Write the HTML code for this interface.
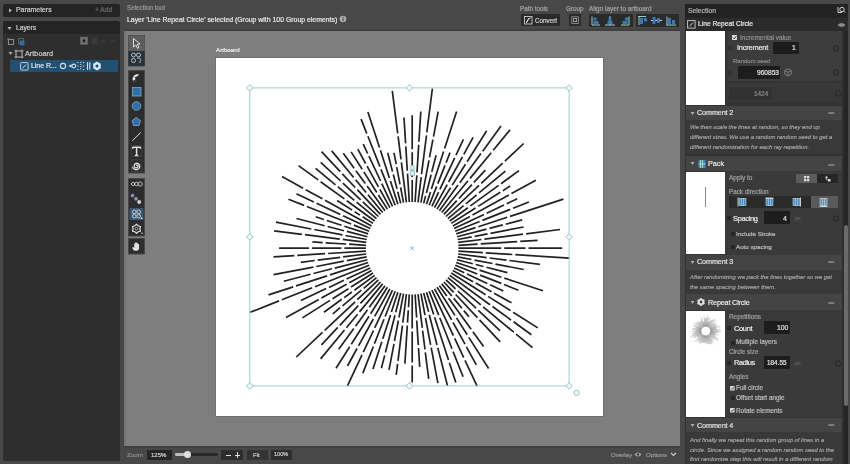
<!DOCTYPE html>
<html><head><meta charset="utf-8">
<style>
*{box-sizing:border-box;margin:0;padding:0}
html,body{width:850px;height:464px;overflow:hidden;background:#484848;font-family:"Liberation Sans",sans-serif;color:#ddd;position:relative}
.a{position:absolute}
.t{position:absolute;white-space:nowrap;line-height:1;-webkit-text-stroke:0.2px currentColor;will-change:transform}
.cm{-webkit-text-stroke:0.15px currentColor;will-change:transform;font-style:italic;font-size:5.85px;color:#a8a8a8;line-height:10px}
svg{position:absolute;overflow:visible}
</style></head><body>
<!-- ================= LEFT PANEL ================= -->
<div class="a" style="left:3px;top:4px;width:117px;height:13px;background:#242424;border-radius:2px"></div>
<svg style="left:8px;top:8px" width="5" height="5"><path d="M1 0.5L4 2.5L1 4.5Z" fill="#bbb"/></svg>
<div class="t" style="left:16px;top:7px;font-size:6.9px;color:#d0d0d0">Parameters</div>
<div class="t" style="left:95px;top:7px;font-size:6.6px;color:#6f6f6f">+ Add</div>
<div class="a" style="left:3px;top:21px;width:117px;height:439.5px;background:#2e2e2e;border-radius:2px"></div>
<div class="a" style="left:3px;top:21px;width:117px;height:13px;background:#242424;border-radius:2px 2px 0 0"></div>
<svg style="left:7px;top:26px" width="5" height="5"><path d="M0.5 1L4.5 1L2.5 4Z" fill="#bbb"/></svg>
<div class="t" style="left:16px;top:24.5px;font-size:6.7px;color:#d0d0d0">Layers</div>
<!-- icon row -->
<svg style="left:6px;top:37px" width="116" height="10">
 <rect x="2.5" y="2.5" width="5" height="5" fill="none" stroke="#8a8a8a" stroke-width="1"/>
 <path d="M1.5 1.5h2M1.5 1.5v2" stroke="#666" stroke-width="0.8"/>
 <rect x="12.5" y="1.5" width="5" height="5" fill="none" stroke="#666" stroke-width="0.8"/>
 <rect x="14" y="4" width="4" height="4" fill="#2f6aa0" stroke="#3d7dbd" stroke-width="0.6"/>
 <rect x="74" y="-0.3" width="8.1" height="8.1" fill="#5e5e5e"/>
 <rect x="75.3" y="1" width="5.5" height="5.5" fill="none" stroke="#8a8a8a" stroke-width="0.6"/>
 <circle cx="78" cy="3.8" r="1.2" fill="#1e1e1e"/>
 <rect x="85.4" y="0" width="5.8" height="7.5" fill="#393939"/>
 <path d="M94.5 5.5l2.5-2l2.5 2" fill="none" stroke="#444" stroke-width="0.9"/>
 <path d="M105 5.5l2.5-2l2.5 2" fill="none" stroke="#444" stroke-width="0.9"/>
</svg>
<!-- artboard row -->
<svg style="left:8px;top:51px" width="5" height="5"><path d="M0.5 1L4.5 1L2.5 4Z" fill="#aaa"/></svg>
<svg style="left:14px;top:49px" width="10" height="10">
 <rect x="2" y="2" width="6" height="6" fill="none" stroke="#bbb" stroke-width="1"/>
 <path d="M0.5 2h1.5M0.5 8h1.5M8 2h1.5M8 8h1.5M2 0.5v1.5M8 0.5v1.5M2 8v1.5M8 8v1.5" stroke="#bbb" stroke-width="0.8"/>
</svg>
<div class="t" style="left:25px;top:50px;font-size:7.3px;color:#cfcfcf">Artboard</div>
<!-- selected layer row -->
<div class="a" style="left:10px;top:59.5px;width:108px;height:12px;background:#225072"></div>
<svg style="left:20px;top:61.5px" width="9" height="9">
 <rect x="0.6" y="0.6" width="7.5" height="7.5" rx="0.8" fill="none" stroke="#cde" stroke-width="0.9"/>
 <path d="M2.5 6.3L6 2.6" stroke="#dde" stroke-width="1"/>
</svg>
<div class="t" style="left:31px;top:62.5px;font-size:6.9px;color:#dde6ee">Line R...</div>
<svg style="left:58px;top:59.5px" width="46" height="12">
 <circle cx="5" cy="6" r="2.6" fill="none" stroke="#cfe0ea" stroke-width="1.1"/>
 <path d="M10.5 6L13.5 4.2V7.8Z" fill="#cfe0ea"/>
 <circle cx="15.8" cy="6" r="1.9" fill="none" stroke="#cfe0ea" stroke-width="1.1"/>
 <path d="M19.3 2.5h1.2M19.3 6h1.2M19.3 9.5h1.2M25 2.5h1.2M25 6h1.2M25 9.5h1.2" stroke="#cfe0ea" stroke-width="1.2"/>
 <path d="M22.8 1.8v8.5" stroke="#cfe0ea" stroke-width="1" stroke-dasharray="1.2 0.9"/>
 <path d="M29.5 2.2v7.6M31.8 2.2v7.6" stroke="#d5e6f0" stroke-width="1.1"/>
 <path d="M39 1.6L42.8 3.8V8.2L39 10.4L35.2 8.2V3.8Z" fill="#d5e6f0"/>
 <circle cx="39" cy="6" r="1.5" fill="#234f6f"/>
</svg>

<!-- ================= TOP BAR ================= -->
<div class="t" style="left:127px;top:5px;font-size:6.3px;color:#9a9a9a">Selection tool</div>
<div class="t" style="left:127px;top:16.5px;font-size:6.9px;color:#e8e8e8">Layer 'Line Repeat Circle' selected (Group with 100 Group elements)</div>
<svg style="left:339px;top:15px" width="8" height="8"><circle cx="4" cy="4" r="3.3" fill="#aaa"/><rect x="3.5" y="3.3" width="1" height="2.8" fill="#3b3b3b"/><rect x="3.5" y="1.8" width="1" height="0.9" fill="#3b3b3b"/></svg>

<div class="t" style="left:520px;top:5.5px;font-size:6.3px;color:#a5a5a5">Path tools</div>
<div class="a" style="left:521px;top:14px;width:39px;height:12px;background:#2b2b2b;border-radius:1px"></div>
<svg style="left:524px;top:16px" width="9" height="9"><rect x="0.5" y="0.5" width="7.5" height="7.5" fill="none" stroke="#ccc" stroke-width="0.9"/><path d="M2 6.5C4 6.5 3 2 6.5 2" fill="none" stroke="#eee" stroke-width="1.1"/></svg>
<div class="t" style="left:534.5px;top:17.5px;font-size:6.3px;color:#cfcfcf">Convert</div>
<div class="t" style="left:565.5px;top:5.5px;font-size:6.3px;color:#a5a5a5">Group</div>
<div class="a" style="left:569px;top:14px;width:11.5px;height:12px;background:#2b2b2b"></div>
<svg style="left:570.5px;top:16px" width="9" height="9"><rect x="0.8" y="0.8" width="6.6" height="6.6" fill="none" stroke="#999" stroke-width="0.8"/><rect x="2.6" y="2.6" width="3" height="3" fill="none" stroke="#bbb" stroke-width="0.8"/></svg>
<div class="t" style="left:588.5px;top:5.5px;font-size:6.4px;color:#a5a5a5">Align layer to artboard</div>
<div class="a" style="left:589px;top:14px;width:43.5px;height:12.5px;background:#2b2b2b"></div>
<div class="a" style="left:635.5px;top:14px;width:43.5px;height:12.5px;background:#2b2b2b"></div>
<svg style="left:589px;top:14px" width="92" height="13">
 <g stroke-width="1">
 <path d="M3 2.5v8.5h8" fill="none" stroke="#9cc"/><rect x="4.5" y="3.5" width="3" height="3" fill="#3a78b0"/><rect x="4.5" y="7" width="5" height="3" fill="#3a78b0"/>
 <path d="M21 2v9.5M16 11h10" fill="none" stroke="#9cc"/><rect x="19.5" y="3.5" width="3" height="3" fill="#3a78b0"/><rect x="18.5" y="7" width="5" height="3" fill="#3a78b0"/>
 <path d="M40 2.5v8.5h-8" fill="none" stroke="#9cc"/><rect x="36" y="3.5" width="3" height="3" fill="#3a78b0"/><rect x="33.5" y="7" width="5" height="3" fill="#3a78b0"/>
 <path d="M49 2.5h8M50 2.5v8.5" fill="none" stroke="#9cc"/><rect x="51" y="4" width="3" height="6" fill="#3a78b0"/><rect x="55" y="4" width="3" height="3.5" fill="#3a78b0"/>
 <path d="M62 6.5h11" fill="none" stroke="#cde"/><rect x="63.5" y="3" width="3" height="7" fill="#3a78b0"/><rect x="68" y="4" width="3" height="5" fill="#3a78b0"/>
 <path d="M77 11h10M78 2.5v8.5" fill="none" stroke="#9cc"/><rect x="79" y="4" width="3" height="6" fill="#3a78b0"/><rect x="83" y="6" width="3" height="4" fill="#3a78b0"/>
 </g>
</svg>

<!-- ================= CANVAS ================= -->
<div class="a" style="left:124px;top:31px;width:556px;height:415px;background:#7e7e7e"></div><div class="a" style="left:124px;top:31px;width:2px;height:415px;background:#747474"></div><div class="a" style="left:124px;top:29.3px;width:556px;height:1.7px;background:#3e3e3e"></div><div class="a" style="left:124px;top:446px;width:556px;height:1.5px;background:#404040"></div>
<div class="a" style="left:216px;top:58px;width:387px;height:358px;background:#fff;box-shadow:0 0 0 0.8px #6c6c6c"></div>
<div class="t" style="left:216px;top:46.5px;font-size:6.2px;color:#ececec">Artboard</div>
<svg style="left:0;top:0" width="850" height="464"><path d="M412.2 201.9L412.2 179.9M412.2 176.9L412.2 152.2M412.2 149.2L412.2 115.2M415.1 202.0L416.8 175.4M417.0 172.4L418.7 144.7M418.9 141.7L420.8 111.5M418.0 202.3L421.2 177.2M421.5 174.2L426.5 135.3M426.8 132.3L432.4 88.5M420.9 202.7L429.0 160.4M429.5 157.4L432.9 139.7M433.5 136.7L438.2 111.7M423.7 203.4L425.6 195.9M426.4 193.0L431.1 174.7M431.8 171.8L436.1 155.2M426.5 204.2L430.5 192.0M431.4 189.1L443.6 151.5M444.6 148.6L456.6 111.5M429.2 205.2L436.7 186.4M437.8 183.6L445.0 165.4M446.1 162.7L450.0 152.6M431.9 206.3L438.6 192.1M439.9 189.4L454.7 157.9M456.0 155.2L463.4 139.4M434.5 207.6L447.2 184.6M448.6 182.0L462.4 156.9M463.8 154.3L473.1 137.3M437.0 209.1L450.6 187.7M452.2 185.1L465.5 164.2M467.1 161.7L486.7 130.8M439.4 210.7L458.0 185.1M459.8 182.7L480.9 153.6M482.7 151.2L501.0 126.0M441.7 212.5L468.0 180.7M470.0 178.4L491.2 152.7M493.2 150.3L510.0 129.9M443.9 214.4L456.8 200.7M458.9 198.5L471.9 184.6M473.9 182.4L485.4 170.2M446.0 216.5L479.0 185.4M481.2 183.4L502.7 163.2M504.9 161.2L523.7 143.5M447.9 218.7L463.6 205.7M465.9 203.8L476.7 194.8M479.0 192.9L505.4 171.1M449.7 221.0L467.9 207.7M470.4 205.9L498.6 185.4M501.0 183.7L519.0 170.6M451.3 223.4L475.5 208.0M478.1 206.4L500.3 192.3M502.9 190.7L510.1 186.0M452.8 225.9L469.9 216.5M472.5 215.1L508.9 195.1M511.5 193.6L535.8 180.3M454.1 228.5L484.0 214.4M486.7 213.2L504.0 205.0M506.8 203.7L517.2 198.8M455.2 231.2L479.6 221.5M482.4 220.4L510.2 209.4M513.0 208.3L528.9 202.0M456.2 233.9L475.5 227.6M478.4 226.7L507.2 217.3M510.1 216.4L563.4 199.1M457.0 236.7L486.5 229.1M489.4 228.4L502.8 224.9M505.7 224.2L522.2 219.9M457.7 239.5L471.7 236.8M474.7 236.3L487.5 233.8M490.5 233.3L523.6 227.0M458.1 242.4L481.4 239.5M484.4 239.1L523.0 234.2M526.0 233.8L560.0 229.5M458.4 245.3L477.7 244.1M480.7 243.9L517.2 241.6M520.2 241.4L537.6 240.3M458.5 248.2L501.2 248.2M504.2 248.2L525.5 248.2M528.5 248.2L562.2 248.2M458.4 251.1L482.8 252.6M485.8 252.8L512.3 254.5M515.3 254.7L569.3 258.1M458.1 254.0L486.7 257.6M489.7 258.0L506.5 260.1M509.4 260.5L539.9 264.3M457.7 256.9L471.5 259.5M474.5 260.1L492.5 263.5M495.4 264.1L523.7 269.5M457.0 259.7L472.8 263.8M475.7 264.5L483.5 266.5M486.4 267.2L507.4 272.6M456.2 262.5L476.7 269.2M479.5 270.1L501.4 277.2M504.3 278.1L543.0 290.7M455.2 265.2L477.3 274.0M480.1 275.1L501.2 283.4M504.0 284.5L518.4 290.2M454.1 267.9L464.3 272.7M467.0 274.0L487.3 283.5M490.0 284.8L503.3 291.1M452.8 270.5L473.1 281.7M475.7 283.1L491.5 291.8M494.1 293.2L511.5 302.8M451.3 273.0L485.6 294.8M488.1 296.4L510.6 310.6M513.1 312.2L537.8 327.9M449.7 275.4L490.0 304.7M492.5 306.5L511.1 320.1M513.6 321.8L531.4 334.8M447.9 277.7L480.8 304.9M483.1 306.8L513.8 332.2M516.1 334.1L532.5 347.7M446.0 279.9L455.6 288.9M457.8 291.0L476.1 308.2M478.3 310.3L500.0 330.6M443.9 282.0L453.6 292.3M455.7 294.5L477.4 317.7M479.5 319.9L500.2 341.9M441.7 283.9L451.8 296.0M453.7 298.4L461.9 308.3M463.8 310.6L468.9 316.8M439.4 285.7L446.8 295.9M448.6 298.3L471.2 329.3M472.9 331.8L483.6 346.5M437.0 287.3L454.9 315.4M456.5 317.9L467.2 334.8M468.8 337.4L488.6 368.5M434.5 288.8L451.6 319.8M453.0 322.4L465.0 344.2M466.4 346.8L476.3 364.8M431.9 290.1L453.4 335.7M454.7 338.4L463.7 357.7M465.0 360.4L477.1 386.1M429.2 291.2L438.7 315.1M439.8 317.8L452.0 348.8M453.1 351.6L463.1 376.8M426.5 292.2L433.7 314.4M434.6 317.2L448.5 359.9M449.4 362.7L455.8 382.4M423.7 293.0L428.6 311.9M429.3 314.8L437.0 345.0M437.8 347.9L447.5 385.7M420.9 293.7L425.0 315.1M425.5 318.0L430.6 344.8M431.2 347.7L437.9 383.2M418.0 294.1L422.3 327.8M422.6 330.7L425.0 349.3M425.3 352.3L428.7 378.8M415.1 294.4L416.6 317.5M416.7 320.5L418.3 345.0M418.5 348.0L419.7 366.9M412.2 294.5L412.2 328.6M412.2 331.6L412.2 362.5M412.2 365.5L412.2 382.5M409.3 294.4L408.5 307.2M408.3 310.2L407.5 322.6M407.3 325.5L404.9 363.6M406.4 294.1L402.8 322.6M402.4 325.6L398.0 360.9M397.6 363.9L396.2 374.9M403.5 293.7L399.0 317.5M398.4 320.5L394.5 340.8M394.0 343.8L389.0 369.8M400.7 293.0L395.7 312.3M395.0 315.2L385.4 352.5M384.7 355.4L381.4 368.2M397.9 292.2L391.4 312.1M390.5 315.0L382.8 338.8M381.8 341.7L373.0 369.0M395.2 291.2L385.1 316.5M384.0 319.3L374.4 343.8M373.3 346.6L362.8 373.1M392.5 290.1L374.7 327.8M373.5 330.5L363.3 352.2M362.0 354.9L347.3 386.1M389.9 288.8L374.7 316.4M373.3 319.0L358.5 345.9M357.0 348.5L347.5 366.0M387.4 287.3L370.6 313.7M369.0 316.3L351.3 344.2M349.7 346.7L336.0 368.3M385.0 285.7L369.3 307.3M367.5 309.7L355.5 326.2M353.8 328.6L338.7 349.3M382.7 283.9L359.5 311.9M357.6 314.2L346.4 327.7M344.5 330.0L320.6 358.9M380.5 282.0L360.4 303.4M358.3 305.6L339.8 325.3M337.8 327.4L321.5 344.8M378.4 279.9L357.3 299.7M355.1 301.8L324.7 330.3M322.5 332.4L296.3 357.0M376.5 277.7L363.7 288.3M361.4 290.2L342.5 305.8M340.2 307.7L332.8 313.9M374.7 275.4L354.4 290.2M351.9 292.0L344.2 297.6M341.8 299.3L324.0 312.3M373.1 273.0L351.0 287.0M348.5 288.7L332.5 298.8M330.0 300.4L302.4 317.9M371.6 270.5L349.3 282.8M346.7 284.2L321.4 298.1M318.8 299.6L286.0 317.6M370.3 267.9L346.6 279.1M343.9 280.3L329.0 287.4M326.2 288.6L300.9 300.6M369.2 265.2L315.0 286.7M312.2 287.8L281.8 299.8M279.1 300.9L250.2 312.3M368.2 262.5L329.9 274.9M327.1 275.9L296.1 285.9M293.2 286.9L268.5 294.9M367.4 259.7L334.8 268.1M331.9 268.8L313.5 273.5M310.6 274.3L283.8 281.2M366.7 256.9L346.8 260.7M343.8 261.2L316.3 266.5M313.4 267.1L273.5 274.7M366.3 254.0L343.1 256.9M340.2 257.3L317.7 260.1M314.7 260.5L300.8 262.3M366.0 251.1L328.1 253.5M325.1 253.7L297.3 255.4M294.3 255.6L273.5 256.9M365.9 248.2L344.4 248.2M341.4 248.2L311.9 248.2M308.9 248.2L279.1 248.2M366.0 245.3L349.1 244.2M346.1 244.0L325.7 242.8M322.7 242.6L312.4 241.9M366.3 242.4L342.8 239.4M339.8 239.1L304.9 234.6M301.9 234.3L274.1 230.8M366.7 239.5L345.4 235.5M342.5 234.9L314.3 229.5M311.3 229.0L275.9 222.2M367.4 236.7L346.9 231.4M344.0 230.7L327.6 226.5M324.7 225.7L296.5 218.5M368.2 233.9L344.4 226.2M341.5 225.2L326.8 220.5M323.9 219.5L315.7 216.8M369.2 231.2L353.9 225.1M351.1 224.0L306.9 206.5M304.1 205.4L288.4 199.2M370.3 228.5L343.1 215.7M340.4 214.4L316.6 203.2M313.8 201.9L296.4 193.7M371.6 225.9L325.0 200.3M322.4 198.8L305.7 189.7M303.1 188.2L282.0 176.6M373.1 223.4L362.6 216.7M360.0 215.1L354.7 211.7M352.2 210.1L337.1 200.5M374.7 221.0L346.8 200.7M344.4 198.9L320.6 181.7M318.2 179.9L298.5 165.6M376.5 218.7L356.6 202.2M354.3 200.3L337.8 186.7M335.5 184.8L315.6 168.3M378.4 216.5L362.8 201.9M360.7 199.8L342.9 183.1M340.7 181.0L320.7 162.3M380.5 214.4L357.3 189.7M355.2 187.5L342.3 173.8M340.3 171.6L321.5 151.6M382.7 212.5L368.0 194.8M366.1 192.5L355.6 179.8M353.7 177.5L331.7 150.9M385.0 210.7L367.1 186.1M365.3 183.6L355.9 170.7M354.1 168.3L343.3 153.3M387.4 209.1L378.4 195.0M376.8 192.5L363.8 171.9M362.2 169.3L351.1 151.9M389.9 207.6L379.9 189.4M378.4 186.8L367.1 166.1M365.6 163.5L357.8 149.2M392.5 206.3L381.8 183.7M380.6 181.0L368.9 156.2M367.6 153.5L363.2 144.1M395.2 205.2L381.0 169.4M379.9 166.6L367.9 136.3M366.8 133.6L361.1 119.1M397.9 204.2L390.4 181.0M389.4 178.1L380.4 150.3M379.5 147.5L367.9 112.0M400.7 203.4L397.7 191.8M397.0 188.9L393.3 174.5M392.5 171.6L387.7 152.7M403.5 202.7L400.6 187.3M400.0 184.4L396.7 167.1M396.2 164.1L394.0 152.9M406.4 202.3L401.4 162.4M401.0 159.4L398.1 136.3M397.7 133.3L392.3 90.8M409.3 202.0L407.5 173.6M407.3 170.7L405.8 146.4M405.6 143.4L404.0 117.5" stroke="#222" stroke-width="1.7" fill="none"/><rect x="249.8" y="87.9" width="319.3" height="298" fill="none" stroke="#9cc6d0" stroke-width="0.95"/><path d="M249.8 84.60000000000001L253.10000000000002 87.9L249.8 91.2L246.5 87.9Z" fill="#eef8f8" stroke="#94bcc4" stroke-width="0.9"/><path d="M409.45 84.60000000000001L412.75 87.9L409.45 91.2L406.15 87.9Z" fill="#eef8f8" stroke="#94bcc4" stroke-width="0.9"/><path d="M569.1 84.60000000000001L572.4 87.9L569.1 91.2L565.8000000000001 87.9Z" fill="#eef8f8" stroke="#94bcc4" stroke-width="0.9"/><path d="M249.8 233.6L253.10000000000002 236.9L249.8 240.20000000000002L246.5 236.9Z" fill="#eef8f8" stroke="#94bcc4" stroke-width="0.9"/><path d="M569.1 233.6L572.4 236.9L569.1 240.20000000000002L565.8000000000001 236.9Z" fill="#eef8f8" stroke="#94bcc4" stroke-width="0.9"/><path d="M249.8 382.59999999999997L253.10000000000002 385.9L249.8 389.2L246.5 385.9Z" fill="#eef8f8" stroke="#94bcc4" stroke-width="0.9"/><path d="M409.45 382.59999999999997L412.75 385.9L409.45 389.2L406.15 385.9Z" fill="#eef8f8" stroke="#94bcc4" stroke-width="0.9"/><path d="M569.1 382.59999999999997L572.4 385.9L569.1 389.2L565.8000000000001 385.9Z" fill="#eef8f8" stroke="#94bcc4" stroke-width="0.9"/><circle cx="576.6" cy="392.9" r="2.7" fill="#eef8f8" stroke="#94bcc4" stroke-width="0.9"/><path d="M410.6 246.6l3.2 3.2M413.8 246.6l-3.2 3.2" stroke="#5aa0c8" stroke-width="0.8"/><circle cx="412.3" cy="167.8" r="2.3" fill="#d8f2ee" stroke="#94bcc4" stroke-width="0.8"/><rect x="410.1" y="170.8" width="4.5" height="4.5" fill="#d8f2ee" stroke="#94bcc4" stroke-width="0.8"/></svg>

<!-- toolbar -->
<svg style="left:128px;top:35px" width="17" height="220">
 <rect x="0.5" y="0.5" width="16" height="30.5" fill="#2c2c2c" stroke="#474747" stroke-width="1"/>
 <rect x="0.5" y="0.5" width="16" height="15.5" fill="#5e5e5e"/>
 <rect x="0.5" y="16" width="16" height="14.5" fill="#283038"/>
 <path d="M5.5 3.5L5.5 12L7.8 10L9.6 13.3L11 12.5L9.3 9.3L12 9Z" fill="#555" stroke="#eee" stroke-width="0.9" stroke-linejoin="round"/>
 <circle cx="5.5" cy="20" r="2" fill="none" stroke="#ccd" stroke-width="0.9"/>
 <circle cx="10.5" cy="20" r="2" fill="none" stroke="#ccd" stroke-width="0.9"/>
 <circle cx="5.5" cy="25.5" r="2" fill="none" stroke="#ccd" stroke-width="0.9"/>
 <path d="M9 24a2 2 0 1 1 2.5 2.8l1 1.2" fill="none" stroke="#ccd" stroke-width="0.9"/>
 <rect x="0.5" y="35.5" width="16" height="102.5" fill="#2c2c2c" stroke="#474747" stroke-width="1"/>
 <path d="M4.6 45.4C4.2 42 6.5 39.3 9.5 39.3C10.5 39.3 11 39.8 10.8 40.6C9.8 40.3 8 41.5 7.6 43.5C7.3 45 6 45.8 4.6 45.4Z" fill="#e6e6e6"/><circle cx="7.6" cy="42.6" r="0.9" fill="#333"/><path d="M5 46.5l3.5-0.6" stroke="#556" stroke-width="0.8"/>
 <rect x="4.5" y="52.5" width="8.5" height="8.5" fill="#2f6fad" stroke="#8ab" stroke-width="0.8"/>
 <circle cx="8.5" cy="71" r="4.3" fill="#2f6fad" stroke="#8ab" stroke-width="0.8"/>
 <path d="M8.3 82.5L12.5 85.6L11 90.5H5.6L4.1 85.6Z" fill="#2f6fad" stroke="#8ab" stroke-width="0.8"/>
 <path d="M4.3 105.8L12.8 97.5" stroke="#ddd" stroke-width="1"/>
 <rect x="3.4" y="110.8" width="10.5" height="10.9" fill="none" stroke="#474747" stroke-width="0.7"/>
 <path d="M4.8 112.3h7.6M8.6 112.3v8.2M6.8 120.5h3.6M4.8 112v1.8M12.4 112v1.8" fill="none" stroke="#e0e0e0" stroke-width="1.5"/>
 <rect x="3.4" y="124.8" width="10.5" height="12" fill="none" stroke="#474747" stroke-width="0.7"/>
 <path d="M8.50 130.10 L8.67 130.06 L8.85 130.06 L9.04 130.09 L9.22 130.16 L9.40 130.27 L9.56 130.42 L9.70 130.60 L9.80 130.81 L9.86 131.04 L9.89 131.29 L9.86 131.55 L9.78 131.81 L9.66 132.06 L9.48 132.29 L9.26 132.49 L9.00 132.65 L8.70 132.77 L8.39 132.83 L8.05 132.83 L7.71 132.77 L7.38 132.64 L7.08 132.46 L6.80 132.21 L6.56 131.91 L6.38 131.57 L6.26 131.19 L6.22 130.78 L6.24 130.37 L6.34 129.96 L6.52 129.56 L6.77 129.19 L7.09 128.87 L7.47 128.61 L7.89 128.41 L8.36 128.30 L8.85 128.26 L9.34 128.32 L9.83 128.46 L10.29 128.70 L10.70 129.01 L11.07 129.41 L11.35 129.87 L11.56 130.38 L11.67 130.93 L11.69 131.50 L11.59 132.08 L11.40 132.63 L11.10 133.15 L10.71 133.62 L10.24 134.02 L9.70 134.33 L9.10 134.54 L8.46 134.64 L7.81 134.62 L7.16 134.49 L6.53 134.24 L5.96 133.88 L5.45 133.42 L5.02 132.87 L4.70 132.24" fill="none" stroke="#e0e0e0" stroke-width="1.3" stroke-linecap="round"/>
 <rect x="0.5" y="143.5" width="16" height="57.5" fill="#2c2c2c" stroke="#474747" stroke-width="1"/>
 <circle cx="5" cy="149" r="1.6" fill="none" stroke="#ddd" stroke-width="0.8"/>
 <circle cx="8.5" cy="149" r="1.8" fill="none" stroke="#ddd" stroke-width="0.8"/>
 <circle cx="12.2" cy="149" r="2.1" fill="none" stroke="#ddd" stroke-width="0.8"/>
 <circle cx="4.5" cy="160.5" r="1.5" fill="#7a99bb" stroke="#aac" stroke-width="0.5"/>
 <circle cx="8" cy="163.8" r="1.5" fill="#7a99bb" stroke="#aac" stroke-width="0.5"/>
 <circle cx="11.2" cy="167" r="1.7" fill="#ccc" stroke="#eee" stroke-width="0.5"/>
 <rect x="1.5" y="173" width="14" height="12" fill="#3a5670"/>
 <circle cx="6.3" cy="176.8" r="1.8" fill="none" stroke="#cdd" stroke-width="0.9"/><circle cx="10.7" cy="176.8" r="1.8" fill="none" stroke="#cdd" stroke-width="0.9"/><circle cx="6.3" cy="181.2" r="1.8" fill="none" stroke="#cdd" stroke-width="0.9"/><circle cx="10.7" cy="181.2" r="1.8" fill="none" stroke="#cdd" stroke-width="0.9"/><path d="M3 179h11M8.5 173.5v11" stroke="#9ab" stroke-width="0.5" stroke-dasharray="0.8 0.8"/>
 <path d="M13 182l2 2h-2z" fill="#eee"/>
 <path d="M8.50 189.20L10.20 190.86L12.48 191.50L11.90 193.80L12.48 196.10L10.20 196.74L8.50 198.40L6.80 196.74L4.52 196.10L5.10 193.80L4.52 191.50L6.80 190.86Z" fill="none" stroke="#ddd" stroke-width="1.2" stroke-linejoin="round"/><circle cx="8.5" cy="193.8" r="1.4" fill="none" stroke="#bbb" stroke-width="0.8"/>
 <path d="M13.5 197l1.8 1.8h-1.8z" fill="#eee"/>
 <rect x="0.5" y="203.5" width="16" height="15.5" fill="#2c2c2c" stroke="#474747" stroke-width="1"/>
 <path d="M5.6 215.2C4.6 213.8 4 212.6 4.6 212.2C5.2 211.8 5.8 212.6 6.2 213.2V208.8C6.2 208 7.2 208 7.3 208.8V211.5V207.8C7.4 207 8.5 207 8.6 207.8V211.5V208.3C8.7 207.5 9.8 207.5 9.9 208.3V211.8V209.5C10 208.8 11.1 208.8 11.1 209.5V213C11.1 214.6 10.2 215.8 8.6 215.8C7.3 215.8 6.3 215.6 5.6 215.2Z" fill="#e0e0e0"/>
</svg>

<!-- bottom bar -->
<div class="t" style="left:127px;top:451.5px;font-size:6.25px;color:#8a8a8a">Zoom</div>
<div class="a" style="left:146.5px;top:450px;width:25.5px;height:10px;background:#262626"></div>
<div class="t" style="left:151px;top:452px;font-size:6px;color:#cfcfcf">125%</div>
<div class="a" style="left:175px;top:453px;width:43px;height:2.5px;background:#2a2a2a;border-radius:1px"></div>
<div class="a" style="left:175px;top:453px;width:12px;height:2.5px;background:#bdbdbd;border-radius:1px"></div>
<div class="a" style="left:183.5px;top:450.5px;width:7px;height:7px;background:#e0e0e0;border-radius:50%"></div>
<div class="a" style="left:221px;top:450px;width:22px;height:10px;background:#2d2d2d"></div>
<div class="a" style="left:225.5px;top:454.5px;width:5px;height:1px;background:#ddd"></div>
<div class="a" style="left:234.5px;top:454.5px;width:5.5px;height:1px;background:#ddd"></div>
<div class="a" style="left:236.75px;top:452.25px;width:1px;height:5.5px;background:#ddd"></div>
<div class="a" style="left:247px;top:450px;width:20.5px;height:10px;background:#333"></div>
<div class="t" style="left:253px;top:452px;font-size:6px;color:#ccc">Fit</div>
<div class="a" style="left:271px;top:450px;width:21px;height:10px;background:#2d2d2d"></div>
<div class="t" style="left:274px;top:452px;font-size:5.6px;color:#ccc">100%</div>
<div class="t" style="left:611px;top:451.5px;font-size:6.1px;color:#9a9a9a">Overlay</div>
<svg style="left:634px;top:451px" width="8" height="7"><path d="M0.5 3.5Q4 -0.5 7.5 3.5Q4 7.5 0.5 3.5Z" fill="#aaa"/><circle cx="4" cy="3.5" r="1.2" fill="#3b3b3b"/></svg>
<div class="t" style="left:646px;top:451.5px;font-size:6.1px;color:#9a9a9a">Options</div>
<svg style="left:670px;top:452px" width="7" height="5"><path d="M1 1l2.5 2.5L6 1" fill="none" stroke="#ccc" stroke-width="1.1"/></svg>

<!-- ================= RIGHT PANEL ================= -->
<div class="a" style="left:684.5px;top:4px;width:163.5px;height:460px;background:#333"></div>
<div class="a" style="left:684.5px;top:4px;width:163.5px;height:14px;background:#232323"></div>
<div class="t" style="left:688px;top:7.5px;font-size:6.8px;color:#b5b5b5">Selection</div>
<svg style="left:836px;top:6px" width="10" height="9"><path d="M2 1v5.5h4" fill="none" stroke="#ccc" stroke-width="1"/><circle cx="6" cy="3.5" r="2.2" fill="none" stroke="#ccc" stroke-width="1"/><path d="M7.5 5l1.5 1.5" stroke="#ccc" stroke-width="1"/></svg>
<div class="a" style="left:684.5px;top:18px;width:163.5px;height:13px;background:#2b2b2b"></div>
<svg style="left:687px;top:20px" width="9" height="9">
 <rect x="0.6" y="0.6" width="7.5" height="7.5" fill="none" stroke="#ccc" stroke-width="0.9"/>
 <path d="M2.5 6.3L6 2.6" stroke="#ddd" stroke-width="1"/>
</svg>
<div class="t" style="left:697.5px;top:21px;font-size:6.7px;color:#e6e6e6">Line Repeat Circle</div>
<svg style="left:837px;top:21.5px" width="9" height="6"><path d="M0.5 3Q4.5 -1 8.5 3Q4.5 7 0.5 3Z" fill="#888"/></svg>

<!-- scrollbar -->
<div class="a" style="left:841px;top:31px;width:7px;height:433px;background:#2f2f2f"></div>
<div class="a" style="left:843.6px;top:31px;width:4.4px;height:433px;background:#252525"></div>
<div class="a" style="left:843.8px;top:225px;width:4.2px;height:181px;background:#6a6a6a;border-radius:2px"></div>

<!-- node 1: tail of a node -->
<div class="a" style="left:686px;top:31px;width:39px;height:73.5px;background:#fff"></div>
<div class="a" style="left:725px;top:31px;width:117px;height:74px;background:#333"></div>
<div class="a" style="left:726.5px;top:31px;width:115.5px;height:50px;background:#3c3c3c;border-radius:0 0 3px 3px"></div>
<svg style="left:732px;top:35px" width="6" height="6"><rect x="0" y="0" width="5" height="5" rx="0.6" fill="#ddd"/><path d="M1 2.5l1.3 1.3L4.2 1.3" fill="none" stroke="#333" stroke-width="0.9"/></svg>
<div class="t" style="left:740px;top:35px;font-size:6.5px;color:#909090">Incremental value</div>
<div class="a" style="left:727px;top:45px;width:5px;height:6px;background:#333;border-radius:50%"></div>
<div class="t" style="left:737px;top:44.2px;font-size:7.4px;color:#eaeaea;letter-spacing:-0.2px">Increment</div>
<div class="a" style="left:773px;top:41.5px;width:26px;height:12px;background:#1d1d1d"></div>
<div class="t" style="left:792px;top:44.5px;font-size:6.8px;color:#e0e0e0">1</div>
<svg style="left:832px;top:45px" width="8" height="7"><circle cx="4" cy="3.5" r="2.6" fill="none" stroke="#2c2c2c" stroke-width="1.2"/></svg>
<div class="t" style="left:733px;top:57.5px;font-size:6px;color:#8a8a8a">Random seed</div>
<div class="a" style="left:737.5px;top:66px;width:42px;height:12.5px;background:#1d1d1d"></div>
<div class="t" style="left:756.5px;top:69.5px;font-size:6.6px;color:#e0e0e0">960853</div>
<svg style="left:784px;top:68px" width="8" height="9"><path d="M4 0.8L7.3 2.5V6.3L4 8L0.7 6.3V2.5Z M0.7 2.5L4 4.3L7.3 2.5M4 4.3V8" fill="none" stroke="#8a8a8a" stroke-width="0.8"/></svg>
<div class="a" style="left:727px;top:69.5px;width:5px;height:6px;background:#333;border-radius:50%"></div>
<svg style="left:832px;top:69px" width="8" height="7"><circle cx="4" cy="3.5" r="2.6" fill="none" stroke="#2c2c2c" stroke-width="1.2"/></svg>
<div class="a" style="left:726.5px;top:82.5px;width:115.5px;height:19px;background:#383838"></div>
<div class="a" style="left:729px;top:87px;width:43px;height:13px;background:#323232"></div>
<div class="t" style="left:754px;top:90.5px;font-size:6.4px;color:#8a8a8a">1424</div>
<svg style="left:834px;top:90px" width="8" height="7"><circle cx="4" cy="3.5" r="2.6" fill="none" stroke="#2c2c2c" stroke-width="1.2"/></svg>

<!-- Comment 2 -->
<div class="a" style="left:686px;top:106px;width:156px;height:14px;background:#444"></div>
<svg style="left:690px;top:111px" width="5" height="5"><path d="M0.5 1L4.5 1L2.5 4Z" fill="#aaa"/></svg>
<div class="t" style="left:697px;top:108.8px;font-size:7.2px;color:#e0e0e0;letter-spacing:-0.1px">Comment 2</div>
<div class="t" style="left:828px;top:109px;font-size:7px;color:#888;letter-spacing:-0.5px">•••</div>
<div class="a" style="left:686px;top:120px;width:156px;height:34px;background:#393939"></div>
<div class="a cm" style="left:690px;top:122px;white-space:nowrap">We then scale the lines at random, so they end up<br>different sizes. We use a random random seed to get a<br>different randomization for each ray repetition.</div>

<!-- Pack -->
<div class="a" style="left:686px;top:156.3px;width:156px;height:14.5px;background:#444"></div>
<svg style="left:690px;top:161px" width="5" height="5"><path d="M0.5 1L4.5 1L2.5 4Z" fill="#aaa"/></svg>
<svg style="left:697.5px;top:158.5px" width="9" height="10"><rect x="0.5" y="1" width="7" height="8" rx="1" fill="#4a86c0"/><path d="M2.5 1v8M4.5 1v8M0.5 5h7" stroke="#cfe" stroke-width="0.6"/></svg>
<div class="t" style="left:708px;top:159.9px;font-size:7.2px;color:#e8e8e8">Pack</div>
<div class="t" style="left:828px;top:161px;font-size:7px;color:#888;letter-spacing:-0.5px">•••</div>
<div class="a" style="left:686px;top:171.5px;width:39px;height:82.5px;background:#fff"></div>
<div class="a" style="left:704.8px;top:187px;width:0.6px;height:20px;background:#888"></div>
<div class="a" style="left:725px;top:171px;width:117px;height:84px;background:#3a3a3a"></div>
<div class="t" style="left:728.5px;top:175px;font-size:6.5px;color:#a0a0a0">Apply to</div>
<div class="a" style="left:796px;top:174px;width:21px;height:9px;background:#5c5c5c"></div>
<div class="a" style="left:817px;top:174px;width:21px;height:9px;background:#262626"></div>
<svg style="left:804px;top:176px" width="6" height="6"><rect x="0" y="0" width="2.3" height="2.3" fill="#ddd"/><rect x="3" y="0" width="2.3" height="2.3" fill="#ddd"/><rect x="0" y="3" width="2.3" height="2.3" fill="#ddd"/><rect x="3" y="3" width="2.3" height="2.3" fill="#ddd"/></svg>
<svg style="left:825px;top:176px" width="6" height="6"><path d="M0.5 0.5h2v2h-2zM3 3h2.5v2.5h-2.5z" fill="#ddd"/><path d="M1.5 2.5v1.5h1.5" fill="none" stroke="#ddd" stroke-width="0.6"/></svg>
<div class="t" style="left:729.3px;top:188.5px;font-size:6.3px;color:#a0a0a0">Pack direction</div>
<div class="a" style="left:728.5px;top:196px;width:109px;height:11.5px;background:#2a2a2a"></div>
<div class="a" style="left:811px;top:196px;width:27px;height:11.5px;background:#5a5a5a"></div>
<svg style="left:728.5px;top:196px" width="110" height="12">
 <g fill="#4a86c0" stroke="#cfe" stroke-width="0.5">
 <rect x="10" y="2.5" width="7" height="7"/><rect x="37" y="2.5" width="7" height="7"/><rect x="64" y="2.5" width="7" height="7"/><rect x="91" y="2.5" width="7" height="7" fill="#6a8aa8"/>
 </g>
 <path d="M12.3 2v8M14.6 2v8M39.3 2v8M41.6 2v8M66.3 2v8M68.6 2v8M93.3 2v8M95.6 2v8" stroke="#dff" stroke-width="0.5"/>
 <path d="M9 1.5v9M44.5 2h-8M71.5 1.5v9M90.5 10.5h8" stroke="#eee" stroke-width="0.8"/>
</svg>
<div class="a" style="left:727px;top:216px;width:4px;height:4px;background:#262626"></div>
<div class="t" style="left:733.3px;top:214.9px;font-size:7.4px;color:#ececec;letter-spacing:-0.3px">Spacing</div>
<div class="a" style="left:764px;top:211px;width:25.5px;height:13px;background:#1d1d1d"></div>
<div class="t" style="left:783px;top:214.5px;font-size:7px;color:#e0e0e0">4</div>
<div class="t" style="left:794.5px;top:215.5px;font-size:5.5px;color:#5e5e5e">px</div>
<svg style="left:832px;top:214.5px" width="8" height="7"><circle cx="4" cy="3.5" r="2.6" fill="none" stroke="#2c2c2c" stroke-width="1.2"/></svg>
<div class="a" style="left:730.5px;top:232px;width:4px;height:4px;background:#262626"></div>
<div class="t" style="left:736.2px;top:231px;font-size:6.2px;color:#bdbdbd">Include Stroke</div>
<div class="a" style="left:730.5px;top:245px;width:4px;height:4px;background:#222;border-radius:50%"></div>
<div class="t" style="left:736.2px;top:244px;font-size:6.2px;color:#bdbdbd">Auto spacing</div>

<!-- Comment 3 -->
<div class="a" style="left:686px;top:255.3px;width:156px;height:14.7px;background:#444"></div>
<svg style="left:690px;top:260px" width="5" height="5"><path d="M0.5 1L4.5 1L2.5 4Z" fill="#aaa"/></svg>
<div class="t" style="left:697px;top:258px;font-size:7.2px;color:#e0e0e0;letter-spacing:-0.1px">Comment 3</div>
<div class="t" style="left:828px;top:258px;font-size:7px;color:#888;letter-spacing:-0.5px">•••</div>
<div class="a" style="left:686px;top:270px;width:156px;height:25px;background:#393939"></div>
<div class="a cm" style="left:690px;top:272px">After randomizing we pack the lines together so we get<br>the same spacing between them.</div>

<!-- Repeat Circle -->
<div class="a" style="left:686px;top:294.2px;width:156px;height:16px;background:#444"></div>
<svg style="left:690px;top:300px" width="5" height="5"><path d="M0.5 1L4.5 1L2.5 4Z" fill="#aaa"/></svg>
<svg style="left:696.1px;top:297.4px" width="10" height="10"><path d="M5.00 1.10L6.50 2.40L8.38 3.05L8.00 5.00L8.38 6.95L6.50 7.60L5.00 8.90L3.50 7.60L1.62 6.95L2.00 5.00L1.62 3.05L3.50 2.40Z" fill="#e6e6e6" stroke="#e6e6e6" stroke-width="0.6" stroke-linejoin="round"/><circle cx="5" cy="5" r="1.4" fill="#444"/></svg>
<div class="t" style="left:708px;top:299px;font-size:7.2px;color:#e8e8e8;letter-spacing:-0.15px">Repeat Circle</div>
<div class="t" style="left:828px;top:299px;font-size:7px;color:#888;letter-spacing:-0.5px">•••</div>
<div class="a" style="left:686px;top:311px;width:39px;height:106px;background:#fff"></div>
<svg style="left:0;top:0" width="850" height="464"><path d="M705.8 326.5L705.8 318.0M706.1 326.5L706.6 317.6M706.4 326.5L707.8 315.3M706.7 326.5L708.4 317.6M706.9 326.6L708.1 321.9M707.2 326.7L710.2 317.6M707.5 326.8L709.5 321.6M707.7 326.9L710.8 320.3M708.0 327.0L711.8 320.1M708.2 327.2L713.1 319.5M708.5 327.3L714.5 319.0M708.7 327.5L715.4 319.4M708.9 327.7L713.0 323.4M709.1 327.9L716.7 320.7M709.3 328.1L714.9 323.4M709.5 328.3L716.3 323.4M709.6 328.6L715.4 324.9M709.8 328.8L717.9 324.3M709.9 329.1L716.1 326.2M710.0 329.3L717.2 326.5M710.1 329.6L720.6 326.2M710.2 329.9L716.6 328.2M710.3 330.1L716.7 328.9M710.3 330.4L720.3 329.2M710.3 330.7L718.1 330.2M710.3 331.0L720.5 331.0M710.3 331.3L721.2 332.0M710.3 331.6L718.3 332.6M710.3 331.9L716.7 333.1M710.2 332.1L715.1 333.4M710.1 332.4L718.6 335.2M710.0 332.7L716.2 335.1M709.9 332.9L714.7 335.2M709.8 333.2L715.5 336.3M709.6 333.4L718.1 338.8M709.5 333.7L717.5 339.5M709.3 333.9L717.6 340.8M709.1 334.1L714.4 339.1M708.9 334.3L714.4 340.2M708.7 334.5L711.4 337.7M708.5 334.7L712.8 340.6M708.2 334.8L713.3 342.8M708.0 335.0L712.1 342.4M707.7 335.1L712.2 344.5M707.5 335.2L710.8 343.6M707.2 335.3L710.1 344.2M706.9 335.4L709.3 344.5M706.7 335.5L708.3 344.2M706.4 335.5L707.4 343.8M706.1 335.5L706.5 342.6M705.8 335.5L705.8 344.2M705.5 335.5L705.1 342.3M705.2 335.5L704.2 343.4M704.9 335.5L703.5 342.9M704.7 335.4L702.8 342.8M704.4 335.3L702.0 342.8M704.1 335.2L701.0 343.2M703.9 335.1L699.4 344.5M703.6 335.0L699.5 342.5M703.4 334.8L698.3 342.8M703.1 334.7L698.6 340.9M702.9 334.5L696.8 341.9M702.7 334.3L696.9 340.5M702.5 334.1L694.4 341.7M702.3 333.9L698.0 337.4M702.1 333.7L697.2 337.3M702.0 333.4L695.0 337.8M701.8 333.2L693.4 337.8M701.7 332.9L694.9 336.1M701.6 332.7L689.9 337.3M701.5 332.4L691.7 335.6M701.4 332.1L693.2 334.2M701.3 331.9L692.2 333.6M701.3 331.6L694.9 332.4M701.3 331.3L692.2 331.9M701.3 331.0L692.8 331.0M701.3 330.7L696.0 330.4M701.3 330.4L692.3 329.3M701.3 330.1L692.4 328.5M701.4 329.9L694.5 328.1M701.5 329.6L696.3 327.9M701.6 329.3L693.7 326.2M701.7 329.1L694.4 325.7M701.8 328.8L693.0 324.0M702.0 328.6L698.4 326.3M702.1 328.3L694.7 322.9M702.3 328.1L696.3 323.2M702.5 327.9L696.8 322.6M702.7 327.7L696.9 321.5M702.9 327.5L697.9 321.5M703.1 327.3L699.0 321.7M703.4 327.2L699.8 321.6M703.6 327.0L700.5 321.3M703.9 326.9L701.0 320.8M704.1 326.8L700.8 318.4M704.4 326.7L701.5 317.7M704.7 326.6L703.4 321.6M704.9 326.5L704.0 321.7M705.2 326.5L703.9 315.6M705.5 326.5L705.0 318.2" stroke="#4a4a4a" stroke-width="0.28" opacity="0.9" fill="none"/></svg>
<div class="a" style="left:725px;top:310px;width:117px;height:107px;background:#3a3a3a"></div>
<div class="t" style="left:729px;top:313.5px;font-size:6.4px;color:#a0a0a0">Repetitions</div>
<div class="a" style="left:727px;top:326px;width:4px;height:4px;background:#262626"></div>
<div class="t" style="left:733.7px;top:325px;font-size:7.4px;color:#ececec;letter-spacing:-0.3px">Count</div>
<div class="a" style="left:764px;top:321px;width:26px;height:13px;background:#1d1d1d"></div>
<div class="t" style="left:777px;top:324.5px;font-size:6.8px;color:#e0e0e0">100</div>
<div class="a" style="left:730.5px;top:340.5px;width:4px;height:4px;background:#262626"></div>
<div class="t" style="left:736.2px;top:339px;font-size:6.4px;color:#bdbdbd">Multiple layers</div>
<div class="t" style="left:729px;top:348.5px;font-size:6.4px;color:#a0a0a0">Circle size</div>
<div class="a" style="left:727px;top:360.5px;width:4px;height:4px;background:#262626"></div>
<div class="t" style="left:734px;top:358.6px;font-size:7.4px;color:#ececec;letter-spacing:-0.38px">Radius</div>
<div class="a" style="left:764px;top:356px;width:26px;height:12.5px;background:#1d1d1d"></div>
<div class="t" style="left:766.5px;top:359.5px;font-size:6.4px;color:#e0e0e0">184.55</div>
<div class="t" style="left:794.5px;top:360.5px;font-size:5.5px;color:#5e5e5e">px</div>
<svg style="left:834px;top:359.5px" width="8" height="7"><circle cx="4" cy="3.5" r="2.6" fill="none" stroke="#2c2c2c" stroke-width="1.2"/></svg>
<div class="t" style="left:729px;top:373.5px;font-size:6.4px;color:#a0a0a0">Angles</div>
<svg style="left:730px;top:386px" width="6" height="6"><rect x="0" y="0" width="4.6" height="4.6" rx="0.6" fill="#ddd"/><path d="M0.9 2.3l1.2 1.2L3.8 1.1" fill="none" stroke="#333" stroke-width="0.8"/></svg>
<div class="t" style="left:736.2px;top:385px;font-size:6.4px;color:#bdbdbd">Full circle</div>
<div class="a" style="left:730.5px;top:396px;width:4px;height:4px;background:#262626"></div>
<div class="t" style="left:736.2px;top:395px;font-size:6.4px;color:#bdbdbd">Offset start angle</div>
<svg style="left:730px;top:408px" width="6" height="6"><rect x="0" y="0" width="4.6" height="4.6" rx="0.6" fill="#ddd"/><path d="M0.9 2.3l1.2 1.2L3.8 1.1" fill="none" stroke="#333" stroke-width="0.8"/></svg>
<div class="t" style="left:736.2px;top:407.5px;font-size:6.4px;color:#bdbdbd">Rotate elements</div>

<!-- Comment 4 -->
<div class="a" style="left:686px;top:417.5px;width:156px;height:14.5px;background:#444"></div>
<svg style="left:690px;top:423px" width="5" height="5"><path d="M0.5 1L4.5 1L2.5 4Z" fill="#aaa"/></svg>
<div class="t" style="left:697px;top:421.5px;font-size:7.2px;color:#e0e0e0;letter-spacing:-0.1px">Comment 4</div>
<div class="t" style="left:828px;top:420.5px;font-size:7px;color:#888;letter-spacing:-0.5px">•••</div>
<div class="a" style="left:686px;top:432px;width:156px;height:32px;background:#393939"></div>
<div class="a cm" style="left:690px;top:436px;line-height:9.7px">And finally we repeat this random group of lines in a<br>circle. Since we assigned a random random seed to the<br>first randomize step this will result in a different random</div>
</body></html>
